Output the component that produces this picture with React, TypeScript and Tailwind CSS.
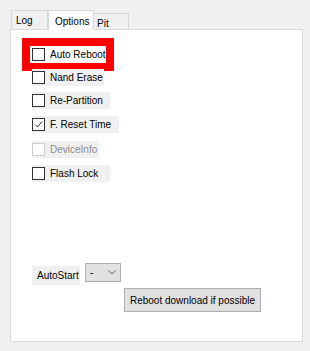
import { useState } from 'react';

type Item = { label: string; width: string; checked?: boolean; disabled?: boolean; mt: string };

const items: Item[] = [
  { label: 'Nand Erase', width: 'w-[72px]', mt: '-mt-[2px]' },
  { label: 'Re-Partition', width: 'w-[78px]', mt: 'mt-[6px]' },
  { label: 'F. Reset Time', width: 'w-[87px]', checked: true, mt: 'mt-[7px]' },
  { label: 'DeviceInfo', width: 'w-[67px]', disabled: true, mt: 'mt-[8px]' },
  { label: 'Flash Lock', width: 'w-[78px]', mt: 'mt-[7px]' },
];

function Box({ checked, disabled }: { checked?: boolean; disabled?: boolean }) {
  return (
    <span
      className={`flex h-[13px] w-[13px] shrink-0 items-center justify-center border bg-white ${
        disabled ? 'border-[#cccccc]' : 'border-[#333333]'
      }`}
    >
      {checked && (
        <svg width="9" height="9" viewBox="0 0 9 9">
          <path d="M1 4.5 L3.5 7 L8 1.5" fill="none" stroke="#333333" strokeWidth="1" />
        </svg>
      )}
    </span>
  );
}

export default function App() {
  const [tab] = useState('Options');

  return (
    <div
      className="relative h-[351px] w-[310px] overflow-hidden whitespace-nowrap bg-[#f0f0f0] text-[10px] text-black"
      style={{ fontFamily: '"Liberation Sans", Arial, sans-serif' }}
    >
      <div className="flex items-end pl-[11px] pt-[10px]">
        <div className="flex h-[19px] w-[37px] items-start border border-b-0 border-[#d9d9d9] pl-[4px] pt-[2px]">
          Log
        </div>
        <div className="relative z-10 -mb-[1px] flex h-[20px] w-[46px] items-start border border-b-0 border-[#d9d9d9] bg-white pl-[6px] pt-[3px]">
          {tab}
        </div>
        <div className="flex h-[16px] w-[35px] items-start border border-b-0 border-l-0 border-[#d9d9d9] pl-[3px] pt-[2px]">
          Pit
        </div>
      </div>

      <div className="ml-[10px] flex h-[313px] w-[293px] flex-col border border-[#d9d9d9] bg-white pl-[21px] pt-[8px]">
        <div className="-ml-[10px] w-[92px] border-[8px] border-[#ff0000] bg-white">
          <div className="flex h-[17px] items-center gap-[5px] pl-[2px]">
            <Box />
            <span>Auto Reboot</span>
          </div>
        </div>

        {items.map((it) => (
          <div
            key={it.label}
            className={`flex h-[17px] items-center gap-[5px] whitespace-nowrap bg-[#f0f0f0] ${it.width} ${it.mt}`}
          >
            <Box checked={it.checked} disabled={it.disabled} />
            <span className={it.disabled ? 'text-[#8c8c8c]' : ''}>{it.label}</span>
          </div>
        ))}

        <div className="mt-[81px] flex items-start gap-[5px]">
          <div className="mt-[3px] flex h-[19px] w-[48px] items-center bg-[#f0f0f0] pl-[5px]">AutoStart</div>
          <div className="flex h-[19px] w-[36px] items-center justify-between border border-[#adadad] bg-[#e1e1e1] pl-[4px] pr-[4px]">
            <span>-</span>
            <svg width="8" height="5" viewBox="0 0 8 5">
              <path d="M0.5 0.5 L4 4 L7.5 0.5" fill="none" stroke="#555555" strokeWidth="1" />
            </svg>
          </div>
        </div>

        <button className="ml-[92px] mt-[3px] flex h-[24px] w-[137px] items-center justify-center border border-[#adadad] bg-[#e1e1e1]">
          Reboot download if possible
        </button>
      </div>
    </div>
  );
}
